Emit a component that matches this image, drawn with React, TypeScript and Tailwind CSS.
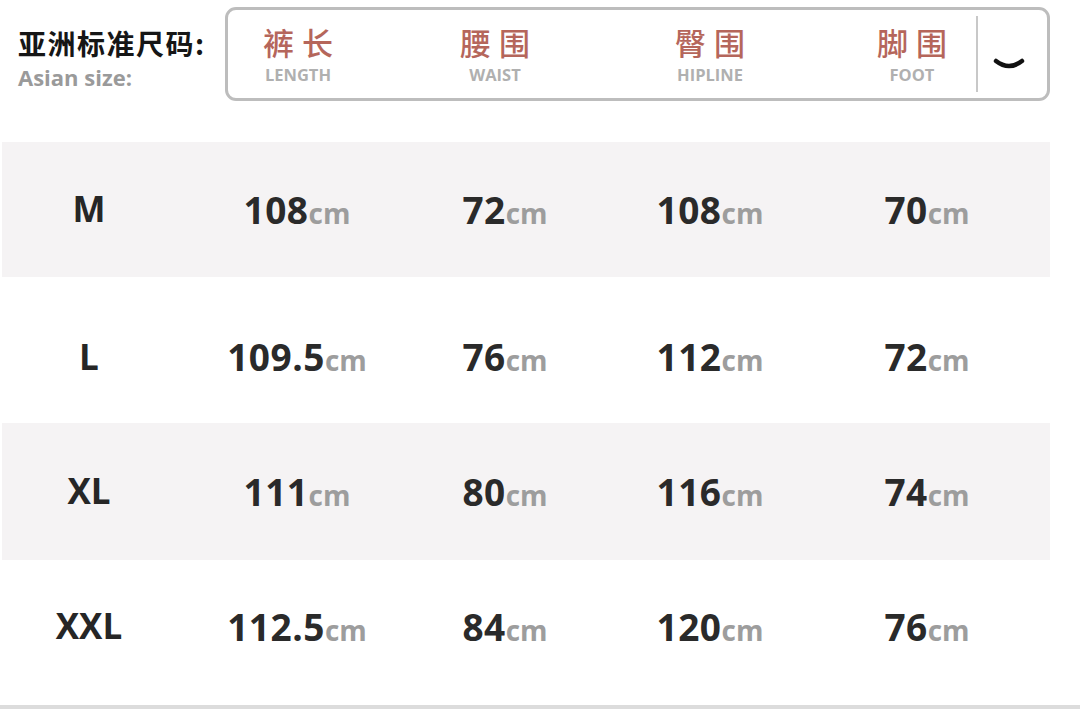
import React from "react";

const num = { fontFamily: '"Open Sans", "Noto Sans", sans-serif' } as React.CSSProperties;
const cjk = { fontFamily: '"Noto Sans CJK SC", "Noto Sans", sans-serif' } as React.CSSProperties;

const rows = [
  { s: "M", v: ["108", "72", "108", "70"], bg: "bg-[#f5f3f4]", h: "h-[135px]", pad: "" },
  { s: "L", v: ["109.5", "76", "112", "72"], bg: "bg-white", h: "h-[146px]", pad: "pt-[14px]" },
  { s: "XL", v: ["111", "80", "116", "74"], bg: "bg-[#f5f3f4]", h: "h-[137px]", pad: "" },
  { s: "XXL", v: ["112.5", "84", "120", "76"], bg: "bg-white", h: "h-[145px]", pad: "pb-[12px]" },
];

const heads = [
  { zh: "裤长", en: "LENGTH", ml: "ml-[10px]" },
  { zh: "腰围", en: "WAIST", ml: "ml-[77px]" },
  { zh: "臀围", en: "HIPLINE", ml: "ml-[95px]" },
  { zh: "脚围", en: "FOOT", ml: "ml-[82px]" },
];

export default function App() {
  return (
    <div className="w-[1080px] h-[709px] bg-white overflow-hidden flex flex-col">
      <div className="flex items-start h-[142px] pt-[7px]">
        <div className="w-[225px] pl-[18px] pt-[19px] flex flex-col">
          <div style={cjk} className="text-[28px] leading-[34px] font-bold text-[#161616] tracking-[1.5px]">
            亚洲标准尺码:
          </div>
          <div style={num} className="text-[22px] leading-[28px] font-bold text-[#9a9a9a] mt-[3px]">
            Asian size:
          </div>
        </div>
        <div className="w-[825px] h-[94px] border-[3px] border-[#bdbdbd] rounded-[11px] flex items-center">
          {heads.map((h) => (
            <div key={h.en} className={`w-[120px] flex flex-col items-center ${h.ml}`}>
              <div style={cjk} className="text-[31px] leading-[38px] font-medium text-[#b5665b] tracking-[8px] pl-[8px]">
                {h.zh}
              </div>
              <div style={num} className="text-[16.5px] leading-[20px] font-bold text-[#b0b0b0] mt-[4px]">
                {h.en}
              </div>
            </div>
          ))}
          <div className="ml-[4px] w-[2px] h-[76px] bg-[#c8c8c8]" />
          <div className="flex-1 flex justify-center pt-[20px] pr-[8px]">
            <svg width="34" height="16" viewBox="0 0 34 16">
              <path d="M4 5 Q17 15 30 5" fill="none" stroke="#111" strokeWidth="4.5" strokeLinecap="round" />
            </svg>
          </div>
        </div>
      </div>
      {rows.map((r) => (
        <div
          key={r.s}
          className={`${r.bg} ${r.h} ${r.pad} w-[1048px] ml-[2px] grid grid-cols-[174px_242px_174px_236px_198px] items-center`}
        >
          <div style={num} className="text-center text-[35px] font-bold text-[#262626]">
            {r.s}
          </div>
          {r.v.map((v, i) => (
            <div key={i} className="text-center whitespace-nowrap">
              <span style={num} className="text-[37px] font-bold text-[#2a2a2a] tracking-[0.5px]">
                {v}
              </span>
              <span style={num} className="text-[28px] font-bold text-[#9d9d9d]">
                cm
              </span>
            </div>
          ))}
        </div>
      ))}
      <div className="h-[4px] bg-[#dcdcdc] mt-auto" />
    </div>
  );
}
